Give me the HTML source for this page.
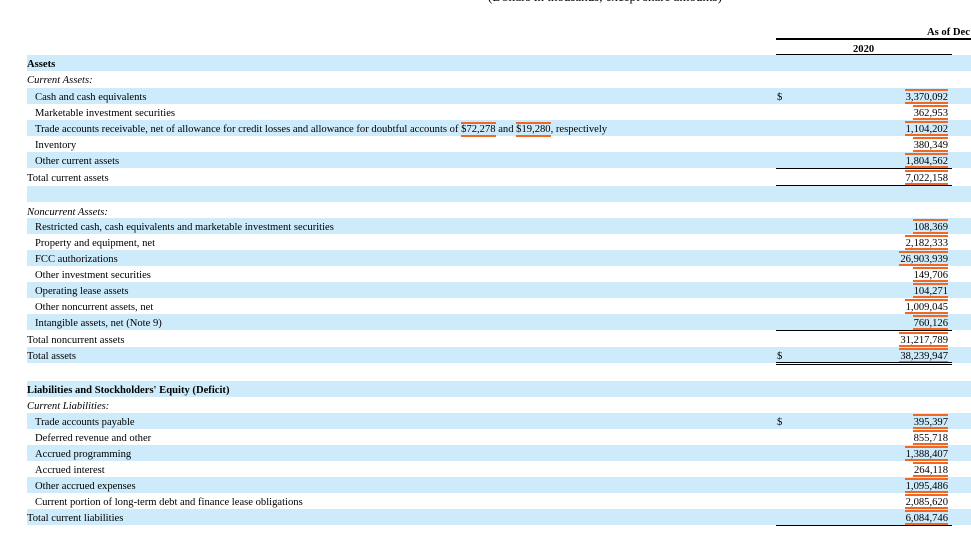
<!DOCTYPE html>
<html><head><meta charset="utf-8"><style>
body{margin:0;width:971px;height:535px;overflow:hidden;background:#fff;font-family:"Liberation Serif",serif;font-size:10.6px;color:#000;position:relative}
.r{position:absolute;left:27px;width:944px;height:16px;line-height:16px}
.b{background:#cdebfb}
.l{position:absolute;left:0;top:2px;white-space:nowrap}
.i{left:8px}
.it{font-style:italic}
.bd{font-weight:bold}
.d{position:absolute;left:750px;top:2px}
.n{position:absolute;right:23px;top:1px;height:11px;line-height:13px;border-top:2px solid #f26722;border-bottom:2px solid #f26722;padding-left:1px;overflow:visible}
.u{border-top:2px solid #f26722;border-bottom:2px solid #f26722;line-height:11px;display:inline-block}
.hl{position:absolute;height:1px;background:#000;left:776px;width:176px}
</style></head><body>
<div style="position:absolute;left:488px;top:-11px;font-size:13px;white-space:nowrap">(Dollars in thousands, except share amounts)</div>
<div style="position:absolute;left:927px;top:27px;font-weight:bold;white-space:nowrap">As of Dec</div>
<div style="position:absolute;left:776px;top:38px;width:195px;height:2px;background:#000"></div>
<div style="position:absolute;left:853px;top:44px;font-weight:bold">2020</div>
<div class="hl" style="top:54px"></div>

<div class="r b" style="top:55px"><span class="l bd">Assets</span></div>
<div class="r" style="top:71px"><span class="l it">Current Assets:</span></div>
<div class="r b" style="top:88px"><span class="l i">Cash and cash equivalents</span><span class="d">$</span><span class="n">3,370,092</span></div>
<div class="r" style="top:104px"><span class="l i">Marketable investment securities</span><span class="n">362,953</span></div>
<div class="r b" style="top:120px"><span class="l i">Trade accounts receivable, net of allowance for credit losses and allowance for doubtful accounts of <span class="u">$72,278</span> and <span class="u">$19,280</span>, respectively</span><span class="n">1,104,202</span></div>
<div class="r" style="top:136px"><span class="l i">Inventory</span><span class="n">380,349</span></div>
<div class="r b" style="top:152px"><span class="l i">Other current assets</span><span class="n">1,804,562</span></div>
<div class="hl" style="top:168px"></div>
<div class="r" style="top:169px"><span class="l">Total current assets</span><span class="n">7,022,158</span></div>
<div class="hl" style="top:185px"></div>
<div class="r b" style="top:186px"></div>
<div class="r" style="top:203px"><span class="l it">Noncurrent Assets:</span></div>
<div class="r b" style="top:218px"><span class="l i">Restricted cash, cash equivalents and marketable investment securities</span><span class="n">108,369</span></div>
<div class="r" style="top:234px"><span class="l i">Property and equipment, net</span><span class="n">2,182,333</span></div>
<div class="r b" style="top:250px"><span class="l i">FCC authorizations</span><span class="n">26,903,939</span></div>
<div class="r" style="top:266px"><span class="l i">Other investment securities</span><span class="n">149,706</span></div>
<div class="r b" style="top:282px"><span class="l i">Operating lease assets</span><span class="n">104,271</span></div>
<div class="r" style="top:298px"><span class="l i">Other noncurrent assets, net</span><span class="n">1,009,045</span></div>
<div class="r b" style="top:314px"><span class="l i">Intangible assets, net (Note 9)</span><span class="n">760,126</span></div>
<div class="hl" style="top:330px"></div>
<div class="r" style="top:331px"><span class="l">Total noncurrent assets</span><span class="n">31,217,789</span></div>
<div class="hl" style="top:347px"></div>
<div class="r b" style="top:347px"><span class="l">Total assets</span><span class="d">$</span><span class="n">38,239,947</span></div>
<div class="hl" style="top:362px"></div>
<div class="hl" style="top:364px"></div>
<div class="r b" style="top:381px"><span class="l bd">Liabilities and Stockholders' Equity (Deficit)</span></div>
<div class="r" style="top:397px"><span class="l it">Current Liabilities:</span></div>
<div class="r b" style="top:413px"><span class="l i">Trade accounts payable</span><span class="d">$</span><span class="n">395,397</span></div>
<div class="r" style="top:429px"><span class="l i">Deferred revenue and other</span><span class="n">855,718</span></div>
<div class="r b" style="top:445px"><span class="l i">Accrued programming</span><span class="n">1,388,407</span></div>
<div class="r" style="top:461px"><span class="l i">Accrued interest</span><span class="n">264,118</span></div>
<div class="r b" style="top:477px"><span class="l i">Other accrued expenses</span><span class="n">1,095,486</span></div>
<div class="r" style="top:493px"><span class="l i">Current portion of long-term debt and finance lease obligations</span><span class="n">2,085,620</span></div>
<div class="hl" style="top:509px"></div>
<div class="r b" style="top:509px"><span class="l">Total current liabilities</span><span class="n">6,084,746</span></div>
<div class="hl" style="top:525px"></div>
</body></html>
